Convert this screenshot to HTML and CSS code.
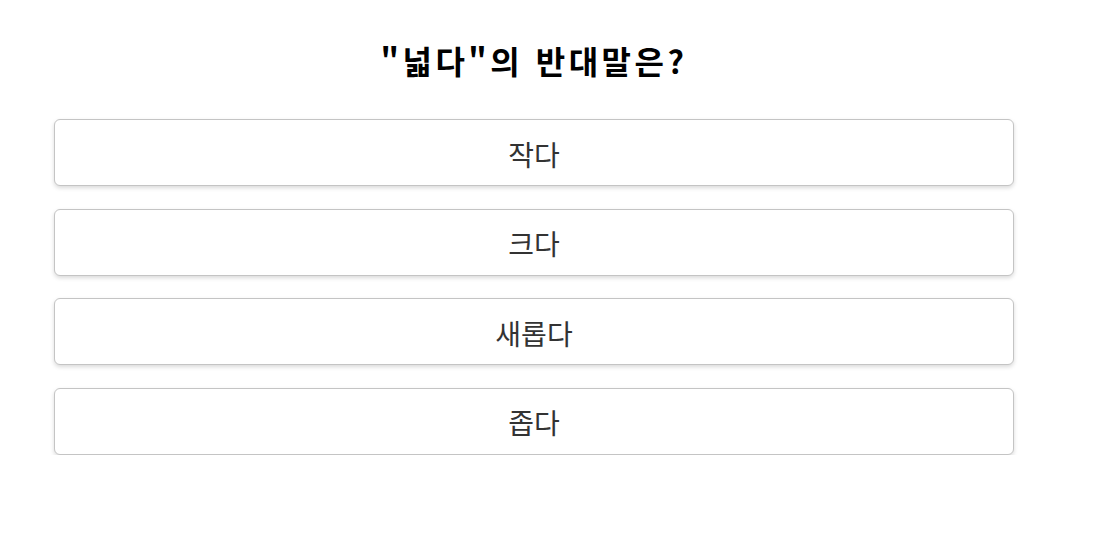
FILE: index.html
```html
<!DOCTYPE html>
<html lang="ko">
<head>
<meta charset="utf-8">
<link rel="stylesheet" href="styles.css">
</head>
<body>
<main class="quiz">
  <h1 class="question">"넓다"의 반대말은?</h1>
  <div class="options">
    <button class="option">작다</button>
    <button class="option">크다</button>
    <button class="option">새롭다</button>
    <button class="option">좁다</button>
  </div>
</main>
</body>
</html>
```
FILE: styles.css
```css
html, body {
  margin: 0;
  padding: 0;
  background: #fff;
}
body {
  font-family: "Noto Sans CJK KR", "Noto Sans", sans-serif;
  color: #333;
}
.quiz {
  width: 960px;
  margin: 0 0 0 54px;
  padding-top: 36px;
}
.question {
  margin: 0 0 35px;
  text-align: center;
  font-size: 32px;
  font-weight: 700;
  color: #000;
  line-height: 48px;
  letter-spacing: 3.5px;
}
.options {
  display: flex;
  flex-direction: column;
  gap: 22.6px;
}
.option {
  height: 67px;
  border: 1px solid #c4c4c4;
  border-radius: 6px;
  background: #fff;
  box-shadow: 0 2px 4px rgba(0,0,0,0.15);
  font-family: inherit;
  font-size: 28px;
  color: #333;
  cursor: pointer;
  padding: 2px 0 0;
}
```
